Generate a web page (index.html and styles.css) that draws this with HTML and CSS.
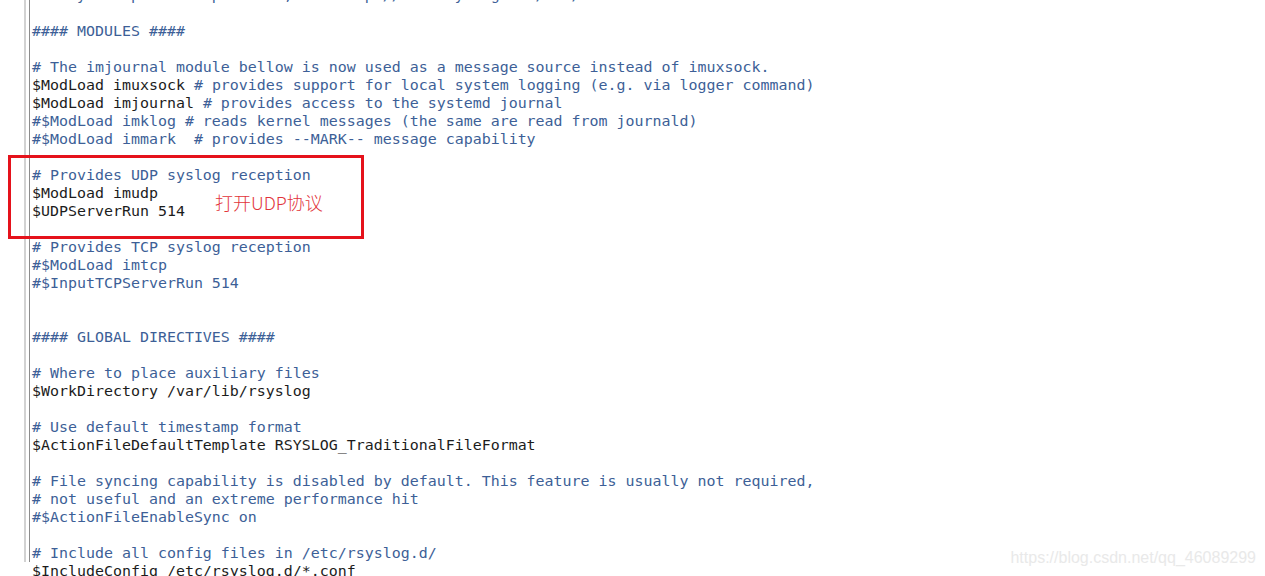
FILE: index.html
```
<!DOCTYPE html>
<html lang="en">
<head>
<meta charset="utf-8">
<title>rsyslog.conf</title>
<link rel="stylesheet" href="styles.css">
</head>
<body>
<div class="screen">
  <div class="editor">
    <div class="rule">
      <pre class="code"><span class="c"># If you experience problems, see http://www.rsyslog.com/doc/troubleshoot.html</span>

<span class="c">#### MODULES ####</span>

<span class="c"># The imjournal module bellow is now used as a message source instead of imuxsock.</span>
$ModLoad imuxsock <span class="c"># provides support for local system logging (e.g. via logger command)</span>
$ModLoad imjournal <span class="c"># provides access to the systemd journal</span>
<span class="c">#$ModLoad imklog # reads kernel messages (the same are read from journald)</span>
<span class="c">#$ModLoad immark  # provides --MARK-- message capability</span>

<span class="c"># Provides UDP syslog reception</span>
$ModLoad imudp
$UDPServerRun 514

<span class="c"># Provides TCP syslog reception</span>
<span class="c">#$ModLoad imtcp</span>
<span class="c">#$InputTCPServerRun 514</span>


<span class="c">#### GLOBAL DIRECTIVES ####</span>

<span class="c"># Where to place auxiliary files</span>
$WorkDirectory /var/lib/rsyslog

<span class="c"># Use default timestamp format</span>
$ActionFileDefaultTemplate RSYSLOG_TraditionalFileFormat

<span class="c"># File syncing capability is disabled by default. This feature is usually not required,</span>
<span class="c"># not useful and an extreme performance hit</span>
<span class="c">#$ActionFileEnableSync on</span>

<span class="c"># Include all config files in /etc/rsyslog.d/</span>
$IncludeConfig /etc/rsyslog.d/*.conf
</pre>
    </div>
  </div>
  <div class="highlight"></div>
  <div class="note">打开UDP协议</div>
  <div class="watermark">https://blog.csdn.net/qq_46089299</div>
</div>
</body>
</html>
```
FILE: styles.css
```
html, body {
  margin: 0;
  padding: 0;
  background: #ffffff;
}

.screen {
  position: relative;
  width: 1265px;
  height: 576px;
  overflow: hidden;
  background: #ffffff;
}

.editor {
  margin-left: 24px;
  height: 100%;
  border-left: 2px solid #d2d2d2;
  padding-left: 3px;
}

.rule {
  height: 100%;
  border-left: 1px solid #8c8c8c;
  padding-left: 2px;
}

.code {
  margin: -14px 0 0 0;
  font-family: "DejaVu Sans Mono", monospace;
  font-size: 14.95px;
  line-height: 18px;
  color: #1c1c1c;
  white-space: pre;
}

.c {
  color: #3d5f97;
}

.highlight {
  position: absolute;
  left: 8px;
  top: 155px;
  width: 350px;
  height: 78px;
  border: 3px solid #e5121b;
}

.note {
  position: absolute;
  left: 215px;
  top: 190px;
  font-family: "Noto Sans CJK SC", serif;
  font-size: 18px;
  font-weight: 300;
  line-height: 24px;
  color: #e2343a;
}

.watermark {
  position: absolute;
  right: 9px;
  top: 548px;
  font-family: "Liberation Sans", Arial, sans-serif;
  font-size: 16px;
  line-height: 20px;
  color: #e9e9e9;
}
```
